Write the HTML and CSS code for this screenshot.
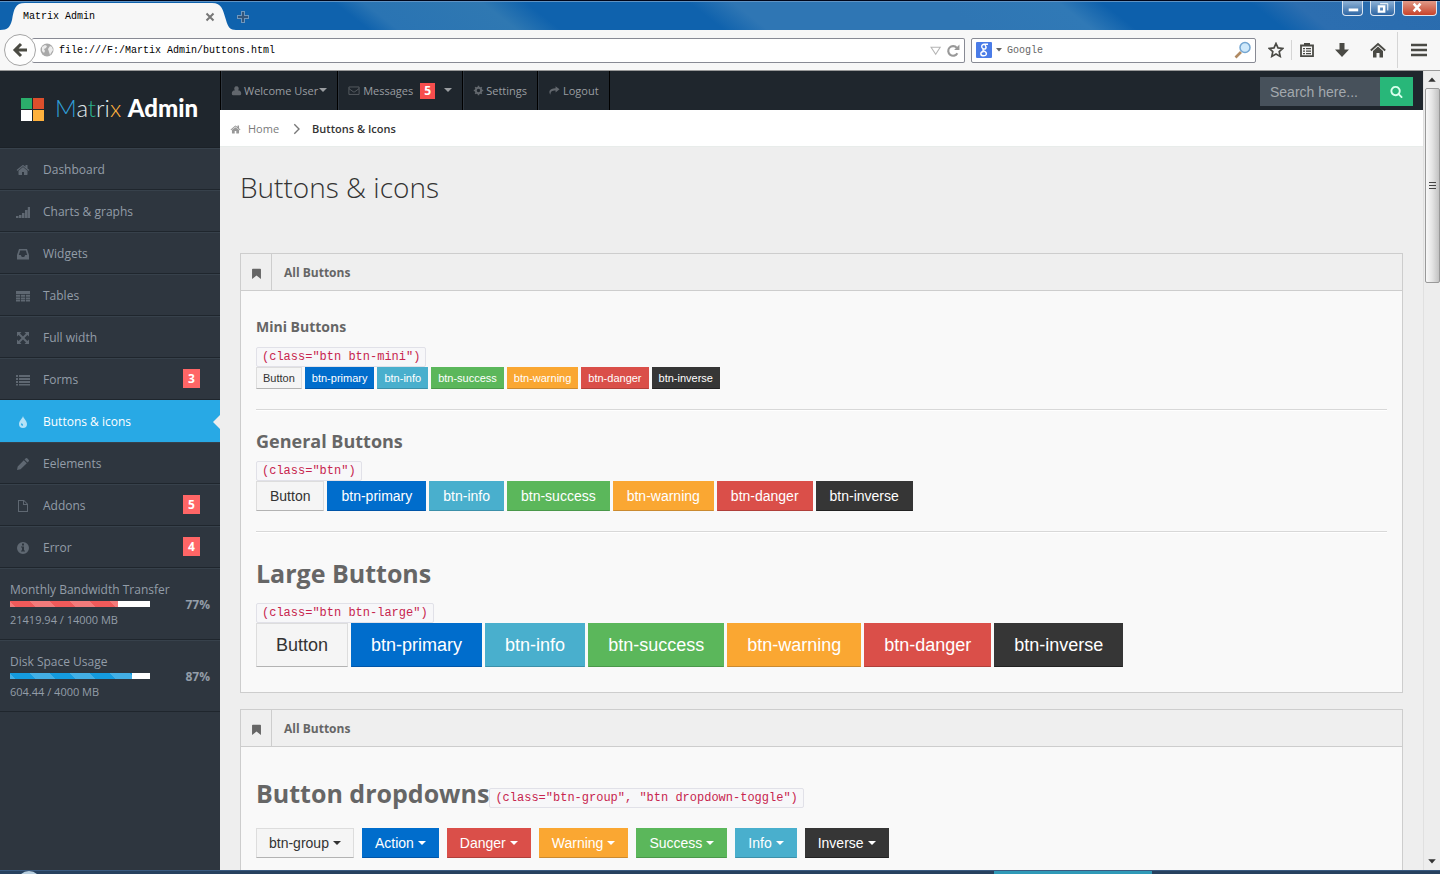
FILE: index.html
```html
<!DOCTYPE html>
<html lang="en">
<head>
<meta charset="utf-8">
<title>Matrix Admin</title>
<link rel="stylesheet" href="styles.css">
</head>
<body>
<svg class="sprite" aria-hidden="true">
  <symbol id="i-home" viewBox="0 0 1792 1792"><path d="M1472 992v480q0 26-19 45t-45 19h-384v-384h-256v384h-384q-26 0-45-19t-19-45v-480q0-1 .5-3t.5-3l575-474 575 474q1 2 1 6zm223-69l-62 74q-8 9-21 11h-3q-13 0-21-7l-692-577-692 577q-12 8-24 7-13-2-21-11l-62-74q-8-10-7-23.500t11-21.500l719-599q32-26 76-26t76 26l244 204v-195q0-14 9-23t23-9h192q14 0 23 9t9 23v408l219 182q10 8 11 21.500t-7 23.500z"/></symbol>
  <symbol id="i-search" viewBox="0 0 1792 1792"><path d="M1216 832q0-185-131.500-316.500t-316.500-131.500-316.500 131.500-131.500 316.500 131.500 316.500 316.500 131.500 316.500-131.500 131.500-316.500zm512 832q0 52-38 90t-90 38q-54 0-90-38l-343-342q-179 124-399 124-143 0-273.500-55.500t-225-150-150-225-55.500-273.500 55.500-273.500 150-225 225-150 273.500-55.500 273.500 55.500 225 150 150 225 55.500 273.500q0 220-124 399l343 343q37 37 37 90z"/></symbol>
  <symbol id="i-signal" viewBox="0 0 14 14"><path d="M0 11h2.500v2H0zM3 10h2.500v3H3zM6 8h2.500v5H6zM9 5h2.500v8H9zM11.800 2H14v11h-2.200z"/></symbol>
  <symbol id="i-inbox" viewBox="0 0 14 14"><path fill-rule="evenodd" d="M3 2h8l2 6v4.500H1V8zM4.200 3.500L2.800 8h2l1 2h2.400l1-2h2L9.800 3.500z"/></symbol>
  <symbol id="i-table" viewBox="0 0 14 14"><path fill-rule="evenodd" d="M0 2h14v3H0zM0 5.800h4.200v2H0zM5 5.800h4v2H5zM9.800 5.800H14v2H9.800zM0 8.400h4.200v1.800H0zM5 8.400h4v1.800H5zM9.800 8.400H14v1.800H9.800zM0 10.800h4.200v1.700H0zM5 10.800h4v1.700H5zM9.800 10.800H14v1.700H9.800z"/></symbol>
  <symbol id="i-full" viewBox="0 0 14 14"><path d="M1 1h4.500L4 2.600l3 3 3-3L8.500 1H13v4.500L11.400 4l-3 3 3 3L13 8.500V13H8.500l1.500-1.600-3-3-3 3L5.500 13H1V8.500L2.600 10l3-3-3-3L1 5.500z"/></symbol>
  <symbol id="i-list" viewBox="0 0 14 14"><path d="M0 2h2v2H0zM3 2h11v2H3zM0 5h2v2H0zM3 5h11v2H3zM0 8h2v2H0zM3 8h11v2H3zM0 11h2v1.600H0zM3 11h11v1.600H3z"/></symbol>
  <symbol id="i-tint" viewBox="0 0 14 14"><path fill-rule="evenodd" d="M7 1c.5 2.500 4 5 4 8a4 4 0 0 1-8 0c0-3 3.500-5.500 4-8zM5.800 8c-.8 1-1.200 2 .2 2.700.8.300 1.300-.6.900-1.200-.4-.5-.8-.8-1.100-1.500z"/></symbol>
  <symbol id="i-pencil" viewBox="0 0 14 14"><path d="M1 13l.7-3.600L7.800 3.300l3 3-6.200 6zM8.500 2.600l1.300-1.300q.7-.6 1.400 0l1.600 1.600q.6.700 0 1.400l-1.300 1.300z"/></symbol>
  <symbol id="i-file" viewBox="0 0 14 14"><path fill-rule="evenodd" d="M2 1h6l4 4v8H2zM3 2v10h8V6H7V2zM8 2.300V5h2.700z"/></symbol>
  <symbol id="i-info" viewBox="0 0 14 14"><path fill-rule="evenodd" d="M7 1a6 6 0 1 1 0 12A6 6 0 0 1 7 1zM6 2.500v2h2v-2zM5 5.500v1h1v3H5v1h4v-1H8v-4z"/></symbol>
  <symbol id="i-user" viewBox="0 0 14 14"><path d="M7 1.500a2.900 2.900 0 0 1 1.900 5.100Q13 7 13 11q0 2-2 2H3q-2 0-2-2 0-4 4.100-4.400A2.900 2.900 0 0 1 7 1.500z"/></symbol>
  <symbol id="i-mail" viewBox="0 0 14 14"><path fill="none" stroke="currentColor" d="M.5 2.500h13v9.500H.5zM.5 4.500L6 8.600q1 .7 2 0l5.500-4.100"/></symbol>
  <symbol id="i-cog" viewBox="0 0 14 14"><path fill="none" stroke="currentColor" stroke-width="2.600" d="M7 3.500a3.500 3.500 0 1 1 0 7 3.500 3.500 0 0 1 0-7z"/><path stroke="currentColor" stroke-width="2" d="M7 1v2M7 11v2M1 7h2M11 7h2M2.800 2.800l1.400 1.400M9.800 9.800l1.400 1.400M2.800 11.200l1.400-1.400M9.800 4.200l1.400-1.400"/></symbol>
  <symbol id="i-share" viewBox="0 0 14 14"><path d="M9 1.500l5 4-5 4V7C4.500 7 2.500 8 2.500 12.500 0 9 .5 4 9 4z"/></symbol>
  <symbol id="i-bookmark" viewBox="0 0 14 14"><path d="M3 2h8q.8 0 .8.800V13L7 9.200 2.200 13V2.800Q2.200 2 3 2z"/></symbol>
  <symbol id="i-chevron" viewBox="0 0 14 14"><path fill="none" stroke="currentColor" stroke-width="1.600" d="M5 1.500L10.500 7 5 12.500"/></symbol>
</svg>

<header class="titlebar">
  <div class="tab">
    <svg class="tab-shape" viewBox="0 0 236 27" preserveAspectRatio="none"><path d="M0 27C8 27 10 24 12 17C14 6 15 0 25 0H212C222 0 223 7 226 17C228 24 230 27 236 27Z"/></svg>
    <span class="tab-title">Matrix Admin</span>
    <button class="plain tab-close" aria-label="Close tab"><svg viewBox="0 0 10 10"><path d="M1.500 1.500l7 7M8.500 1.500l-7 7"/></svg></button>
  </div>
  <button class="plain tab-new" aria-label="New tab"><svg viewBox="0 0 12 12"><path class="edge" d="M6 0v12M0 6h12"/><path d="M6 1v10M1 6h10"/></svg></button>
  <div class="win">
    <button class="win-min" aria-label="Minimize"><svg viewBox="0 0 20 14"><path d="M6 7.500h10v3H6z"/></svg></button>
    <button class="win-max" aria-label="Restore"><svg viewBox="0 0 24 14"><path fill-rule="evenodd" d="M7 4h8v8H7zM9.500 6.500v3h3v-3z"/><path fill="none" stroke="#fff" d="M9.500 2.500h8v7"/></svg></button>
    <button class="win-close" aria-label="Close"><svg viewBox="0 0 34 14"><path fill="none" stroke="#fff" stroke-width="2.600" d="M11 2.500l7 8M18 2.500l-7 8"/></svg></button>
  </div>
</header>

<div class="toolbar">
  <button class="back" aria-label="Back"><svg viewBox="0 0 16 16"><path d="M9 2L3 8l6 6M3 8h12"/></svg></button>
  <div class="field url">
    <svg class="globe" viewBox="0 0 14 14"><circle cx="7" cy="7" r="6.500" fill="#a9a9a9"/><path fill="#ececec" d="M2 4l3-2 2 1-1 2-2 1 1 2-1 2-2-2zM8 6l2-3 2 1 1 3-2 3-1 2-1-3z"/></svg>
    <input type="text" aria-label="Address" value="file:///F:/Martix Admin/buttons.html">
    <svg class="urltools" viewBox="0 0 28 14"><path fill="none" stroke="#b5b5b5" d="M1 4h8.500L5.300 10.500z"/><path fill="none" stroke="#999" stroke-width="2" d="M25.500 9.500A4.500 4.500 0 1 1 25 4.500"/><path fill="#999" d="M27.500 1.500v5h-5z"/></svg>
  </div>
  <div class="field google">
    <svg class="g" viewBox="0 0 16 16"><rect width="16" height="16" rx="1" fill="#4a7ce8"/><path fill="none" stroke="#fff" stroke-width="1.400" d="M12 2.200H8.500a2.600 2.400 0 1 0 1.200 4.400q.9-2-.8-4M7.200 7.300q-.9 1.100 1 1.900c3.200 1.300 2.800 4.600-.6 4.600s-4-3.800 0-4.300"/></svg>
    <svg class="tiny" viewBox="0 0 6 4"><path fill="#666" d="M0 0h6L3 3.500z"/></svg>
    <input type="text" aria-label="Web search" placeholder="Google">
    <svg class="lens" viewBox="0 0 18 18"><path stroke="#b08a62" stroke-width="2.600" d="M1.500 16.500L7 11"/><circle cx="11" cy="6.500" r="5" fill="#cfe9fb" stroke="#74a6d2" stroke-width="1.500"/></svg>
  </div>
  <nav class="tools" aria-label="Browser tools">
    <button class="plain" aria-label="Bookmark"><svg viewBox="0 0 16 16"><path fill="none" stroke="#4a4a45" stroke-width="1.700" d="M8 1.500l2 4.400 4.800.5-3.600 3.200 1 4.800L8 12l-4.200 2.400 1-4.800L1.200 6.400 6 5.900z"/></svg></button>
    <i class="sep short"></i>
    <button class="plain" aria-label="Bookmark list"><svg viewBox="0 0 16 16"><path fill="none" stroke="#4a4a45" stroke-width="1.800" d="M2 3.500h12v10.700H2z"/><path fill="#4a4a45" d="M5 1h6v3H5zM4 6h2v1.300H4zM7 6h5v1.300H7zM4 8.500h2v1.300H4zM7 8.500h5v1.300H7zM4 11h2v1.300H4zM7 11h5v1.300H7z"/></svg></button>
    <button class="plain down" aria-label="Downloads"><svg viewBox="0 0 16 16"><path fill="#4a4a45" d="M5.500 1h5v6.500H15L8 15 1 7.500h4.500z"/></svg></button>
    <button class="plain home" aria-label="Home"><svg viewBox="0 0 16 16"><path fill="none" stroke="#4a4a45" stroke-width="1.800" d="M.8 8.500L8 2l7.200 6.500"/><path fill="#4a4a45" d="M3 9l5-4.500L13 9v6.500H9.500V11h-3v4.500H3z"/></svg></button>
    <i class="sep"></i>
    <button class="plain menu" aria-label="Menu"><svg viewBox="0 0 16 16"><path stroke="#4a4a45" stroke-width="2.600" d="M0 3h16M0 8h16M0 13h16"/></svg></button>
  </nav>
</div>

<div class="viewport">
  <aside class="sidebar">
    <div class="logo">
      <svg viewBox="0 0 23 23"><path fill="#2bae6b" d="M0 0h11v11H0z"/><path fill="#dc4f2c" d="M12 0h11v11H12z"/><path fill="#fff" d="M0 12h11v11H0z"/><path fill="#ffb13d" d="M12 12h11v11H12z"/></svg>
      <span class="word"><span class="c1">M</span><span class="c2">a</span><span class="c3">t</span><span class="c2">ri</span><span class="c4">x</span> <b>Admin</b></span>
    </div>
    <nav class="nav">
      <a href="#"><svg><use href="#i-home"/></svg><span>Dashboard</span></a>
      <a href="#"><svg><use href="#i-signal"/></svg><span>Charts &amp; graphs</span></a>
      <a href="#"><svg><use href="#i-inbox"/></svg><span>Widgets</span></a>
      <a href="#"><svg><use href="#i-table"/></svg><span>Tables</span></a>
      <a href="#"><svg><use href="#i-full"/></svg><span>Full width</span></a>
      <a href="#"><svg><use href="#i-list"/></svg><span>Forms</span><b class="badge">3</b></a>
      <a href="#" class="active"><svg><use href="#i-tint"/></svg><span>Buttons &amp; icons</span></a>
      <a href="#"><svg><use href="#i-pencil"/></svg><span>Eelements</span></a>
      <a href="#"><svg><use href="#i-file"/></svg><span>Addons</span><b class="badge">5</b></a>
      <a href="#"><svg><use href="#i-info"/></svg><span>Error</span><b class="badge">4</b></a>
    </nav>
    <section class="stat">
      <div class="stat-main"><span class="stat-name">Monthly Bandwidth Transfer</span>
        <div class="bar"><div class="fill red" style="width:77%"></div></div>
        <span class="stat-val">21419.94 / 14000 MB</span></div>
      <b>77%</b>
    </section>
    <section class="stat">
      <div class="stat-main"><span class="stat-name">Disk Space Usage</span>
        <div class="bar"><div class="fill blue" style="width:87%"></div></div>
        <span class="stat-val">604.44 / 4000 MB</span></div>
      <b>87%</b>
    </section>
  </aside>

  <main class="content">
    <div class="topbar">
      <nav class="usernav">
        <a href="#"><svg><use href="#i-user"/></svg>Welcome User<i class="caret"></i></a>
        <a href="#"><svg class="wide"><use href="#i-mail"/></svg>Messages<b class="count">5</b><i class="caret far"></i></a>
        <a href="#"><svg><use href="#i-cog"/></svg>Settings</a>
        <a href="#"><svg class="wide"><use href="#i-share"/></svg>Logout</a>
      </nav>
      <form class="search">
        <input type="text" aria-label="Search" placeholder="Search here...">
        <button type="button" aria-label="Search"><svg><use href="#i-search"/></svg></button>
      </form>
    </div>
    <nav class="crumbs" aria-label="Breadcrumb">
      <a href="#"><svg class="house"><use href="#i-home"/></svg>Home</a>
      <svg class="chev"><use href="#i-chevron"/></svg>
      <a href="#" class="current">Buttons &amp; Icons</a>
    </nav>
    <h1>Buttons &amp; icons</h1>

    <section class="widget">
      <header><span class="mark"><svg><use href="#i-bookmark"/></svg></span><h2>All Buttons</h2></header>
      <div class="body">
        <h5>Mini Buttons</h5>
        <code>(class="btn btn-mini")</code>
        <div class="row mini">
          <button class="btn">Button</button><button class="btn primary">btn-primary</button><button class="btn info">btn-info</button><button class="btn success">btn-success</button><button class="btn warning">btn-warning</button><button class="btn danger">btn-danger</button><button class="btn inverse">btn-inverse</button>
        </div>
        <hr>
        <h4>General Buttons</h4>
        <code>(class="btn")</code>
        <div class="row general">
          <button class="btn">Button</button><button class="btn primary">btn-primary</button><button class="btn info">btn-info</button><button class="btn success">btn-success</button><button class="btn warning">btn-warning</button><button class="btn danger">btn-danger</button><button class="btn inverse">btn-inverse</button>
        </div>
        <hr>
        <h3>Large Buttons</h3>
        <code>(class="btn btn-large")</code>
        <div class="row large">
          <button class="btn">Button</button><button class="btn primary">btn-primary</button><button class="btn info">btn-info</button><button class="btn success">btn-success</button><button class="btn warning">btn-warning</button><button class="btn danger">btn-danger</button><button class="btn inverse">btn-inverse</button>
        </div>
      </div>
    </section>

    <section class="widget">
      <header><span class="mark"><svg><use href="#i-bookmark"/></svg></span><h2>All Buttons</h2></header>
      <div class="body">
        <div class="headline"><h3>Button dropdowns</h3><code>(class="btn-group", "btn dropdown-toggle")</code></div>
        <div class="row groups">
          <button class="btn">btn-group<i class="caret"></i></button><button class="btn primary">Action<i class="caret"></i></button><button class="btn danger">Danger<i class="caret"></i></button><button class="btn warning">Warning<i class="caret"></i></button><button class="btn success">Success<i class="caret"></i></button><button class="btn info">Info<i class="caret"></i></button><button class="btn inverse">Inverse<i class="caret"></i></button>
        </div>
      </div>
    </section>
  </main>

  <div class="scroll" aria-hidden="true">
    <svg class="arrow" viewBox="0 0 17 17"><path d="M4.500 11L8.500 6.500l4 4.500z"/></svg>
    <div class="thumb"><i></i><i></i><i></i></div>
    <svg class="arrow end" viewBox="0 0 17 17"><path d="M4.500 6l4 4.500L12.500 6z"/></svg>
  </div>
</div>
<footer class="taskbar"><i class="orb"></i><i class="task"></i></footer>
</body>
</html>
```
FILE: styles.css
```css
* { box-sizing: border-box; }
body {
  margin: 0;
  height: 100vh;
  display: flex;
  flex-direction: column;
  overflow: hidden;
  font: 12px/20px "Open Sans", sans-serif;
  color: #666;
}
a { color: inherit; text-decoration: none; }
button, input { font: inherit; margin: 0; padding: 0; border: 0; border-radius: 0; }
svg { fill: currentColor; flex: none; display: block; }
i { font-style: normal; }
.sprite { position: absolute; width: 0; height: 0; }
.plain { background: none; display: flex; align-items: center; justify-content: center; }

/* window title bar */
.titlebar {
  flex: none;
  height: 30px;
  display: flex;
  align-items: stretch;
  border-top: 1px solid #00061a;
  box-shadow: inset 0 1px 0 #5f93c4;
  background: linear-gradient(38deg, #0f62ad 0%, #0f62ad 25%, #2a74b3 27%, #2f78b2 35%, #0f62ad 38%, #0f62ad 49%, #2f76b4 52%, #2f76b4 66%, #3079b6 74%, #0d60ac 77%, #0d60ac 87%, #2c6eb0 90%, #2a6cae 100%);
}
.tab {
  position: relative;
  width: 236px;
  display: flex;
  align-items: center;
  padding: 3px 21px 0 23px;
}
.tab-shape { position: absolute; left: 0; bottom: 0; width: 100%; height: 27px; fill: #f7f7f7; }
.tab-title, .tab-close { position: relative; }
.tab-title { flex: 1; color: #000; font: 10px/20px "Liberation Mono", monospace; }
.tab-close svg { width: 10px; height: 10px; stroke: #777; stroke-width: 2; }
.tab-new { padding-top: 2px; margin-left: 1px; }
.tab-new svg { width: 12px; height: 12px; stroke: #33557a; stroke-width: 2; }
.tab-new .edge { stroke: #6f97bd; stroke-width: 4; }
.win { margin-left: auto; padding-right: 3px; display: flex; gap: 7px; align-items: flex-start; }
.win button {
  height: 15px;
  border: 1px solid #dbe6f2;
  border-top: 0;
  border-radius: 0 0 4px 4px;
  background: linear-gradient(#8eb2d6, #2e66a4);
  color: #fff;
}
.win-min { width: 21px; }
.win-max { width: 25px; }
.win .win-close { width: 35px; background: linear-gradient(#e09a88, #c8432a); }
.win svg { width: 100%; height: 14px; }

/* browser toolbar */
.toolbar {
  flex: none;
  height: 41px;
  display: flex;
  align-items: center;
  padding: 0 13px 0 4px;
  background: #f7f7f7;
  border-bottom: 1px solid #999;
}
.back {
  position: relative;
  width: 32px;
  height: 32px;
  border: 1px solid #a5a5a5;
  border-radius: 50%;
  background: #fdfdfd;
  display: flex;
  align-items: center;
  justify-content: center;
}
.back svg { width: 16px; height: 16px; fill: none; stroke: #4a4a42; stroke-width: 3; }
.field {
  height: 25px;
  display: flex;
  align-items: center;
  border: 1px solid #888a94;
  border-radius: 2px;
  background: #fff;
  font: 10px/20px "Liberation Mono", monospace;
}
.field input { flex: 1; min-width: 0; height: 23px; padding-top: 1px; background: none; color: #000; outline: 0; }
.url { flex: 1; margin-left: -4px; padding: 0 4px 0 8px; border-left: 0; }
.globe { width: 14px; height: 14px; margin-right: 5px; }
.urltools { width: 30px; height: 15px; }
.google { width: 285px; margin-left: 6px; padding: 0 3px 0 4px; }
.g { width: 16px; height: 16px; }
.tiny { width: 6px; height: 4px; margin: 0 5px 0 4px; }
.google input::placeholder { color: #666; opacity: 1; }
.lens { width: 18px; height: 18px; }
.tools { display: flex; align-items: center; margin-left: 12px; }
.tools svg { width: 16px; height: 16px; }
.sep { width: 1px; height: 36px; background: #d5d5d5; margin: 0 11px; }
.sep.short { height: 20px; margin: 0 7px; }
.down { margin-left: 19px; }
.home { margin-left: 20px; }
.menu { padding-left: 2px; }

/* page */
.viewport {
  flex: 1;
  min-height: 0;
  display: grid;
  grid-template-columns: 220px 1fr 17px;
  background: #eee;
}
.sidebar { background: #2e363f; color: #939da8; overflow: hidden; }
.logo {
  height: 77px;
  padding-left: 21px;
  display: flex;
  align-items: center;
  gap: 11px;
  background: #1f262d;
  border-bottom: 1px solid #1b2127;
}
.logo svg { width: 23px; height: 23px; }
.word { padding-bottom: 3px; font: 300 24px/30px Lato, sans-serif; color: #fff; white-space: nowrap; }
.word b { font-weight: 900; }
.c1 { color: #2f9fd8; }
.c2 { color: #dfe6ea; }
.c3 { color: #2bae8b; }
.c4 { color: #ffb13d; }
.nav a {
  height: 42px;
  padding: 2px 20px 0 16px;
  display: flex;
  align-items: center;
  border-top: 1px solid #37414b;
  border-bottom: 1px solid #1f262d;
}
.nav svg { width: 14px; height: 14px; margin-right: 13px; color: #5f6872; }
.nav span { flex: 1; }
.nav .active {
  position: relative;
  background: #28a9e5;
  border-color: #28a9e5;
  color: #fff;
}
.nav .active svg { color: #b6e2f7; }
.nav .active::after {
  content: "";
  position: absolute;
  right: 0;
  border: 7px solid transparent;
  border-left: 0;
  border-right-color: #eee;
}
.badge {
  width: 17px;
  height: 19px;
  margin-bottom: 4px;
  text-align: center;
  line-height: 20px;
  font-size: 12px;
  color: #fff;
  background: #f66;
}
.stat {
  height: 72px;
  padding: 11px 10px 0;
  display: flex;
  justify-content: space-between;
  border-top: 1px solid #37414b;
  border-bottom: 1px solid #1f262d;
  white-space: nowrap;
}
.stat-main { width: 140px; }
.stat-name, .stat-val { display: block; }
.stat-val { font-size: 11px; line-height: 26px; }
.stat > b { padding-top: 15px; }
.bar { height: 6px; margin-top: 1px; background: #fff; }
.fill { height: 6px; background-image: linear-gradient(45deg, transparent 25%, #ffffff33 25% 50%, transparent 50% 75%, #ffffff33 75%); background-size: 40px 40px; }
.red { background-color: #f05a5a; }
.blue { background-color: #149bdf; }

.content { min-width: 0; overflow: hidden; }
.topbar {
  height: 39px;
  display: flex;
  justify-content: space-between;
  align-items: center;
  background: #1f262d;
}
.usernav { display: flex; height: 39px; border-left: 1px solid #000; }
.usernav a {
  display: flex;
  align-items: center;
  padding: 0 10px;
  font-size: 11px;
  color: #9a9da1;
  border-right: 1px solid #000;
  box-shadow: inset 1px 0 #2e363f;
}
.usernav svg { width: 11px; height: 11px; margin-right: 2px; color: #62676d; }
.usernav .wide { width: 12px; margin-right: 3px; }
.caret {
  display: inline-block;
  border: 4px solid transparent;
  border-top-color: currentColor;
  border-bottom: 0;
}
.usernav .caret { margin-bottom: 2px; margin-left: 1px; }
.usernav .far { margin-left: 9px; }
.count { width: 15px; margin-left: 7px; text-align: center; line-height: 16px; font-size: 12px; color: #fff; background: #f74d4d; }
.search { display: flex; margin-right: 10px; height: 29px; margin-top: 2px; }
.search input {
  width: 120px;
  padding: 0 10px;
  background: #47515b;
  color: #ccc;
  font: 14px/20px "Liberation Sans", Arial, sans-serif;
}
.search input::placeholder { color: #a3a9ae; opacity: 1; }
.search button { width: 33px; background: #28b779; color: #d8ffec; display: flex; align-items: center; justify-content: center; }
.search button svg { width: 13px; height: 13px; }
.crumbs {
  height: 37px;
  display: flex;
  align-items: center;
  padding: 2px 0 0 10px;
  background: #fff;
  border-bottom: 1px solid #e8ecea;
  font-size: 11px;
}
.crumbs a { display: flex; align-items: center; color: #7a7a7a; }
.house { width: 11px; height: 11px; margin-right: 7px; color: #999; }
.chev { width: 12px; height: 12px; margin: 0 10px 0 11px; color: #777; }
.crumbs .current { font-weight: 600; color: #333; }
h1 { margin: 20px 20px 46px; font-size: 28px; line-height: 40px; font-weight: 300; color: #333; }

.widget { margin: 0 20px 16px; border: 1px solid #cdcdcd; background: #f9f9f9; }
.widget > header { height: 37px; display: flex; align-items: center; background: #efefef; border-bottom: 1px solid #cdcdcd; }
.mark { width: 31px; height: 36px; padding-top: 3px; display: flex; align-items: center; justify-content: center; border-right: 1px solid #cdcdcd; }
.mark svg { width: 13px; height: 13px; }
h2 { margin: 1px 0 0 12px; font-size: 12px; line-height: 20px; font-weight: 700; }
.body { padding: 26px 15px 25px; }
h3, h4, h5 { margin: 0 0 10px; line-height: 20px; font-weight: 700; color: #666; }
h5 { font-size: 14px; }
h4 { font-size: 18px; }
h3 { font-size: 25px; line-height: 40px; }
code {
  display: block;
  width: max-content;
  padding: 1px 5px 0;
  border: 1px solid #e1e1e8;
  background: #f7f7f9;
  border-radius: 2px;
  font: 12px/17px "Liberation Mono", monospace;
  color: #c7254e;
}
hr { margin: 20px 0; border: 0; border-top: 1px solid #d8d8d8; border-bottom: 1px solid #fff; }
.row { display: flex; gap: 3px; }
.btn {
  height: 30px;
  padding: 0 12px;
  border: 1px solid #ddd;
  border-bottom-color: #b3b3b3;
  background: #f5f5f5;
  color: #333;
  font: 14px/20px "Liberation Sans", Arial, sans-serif;
  white-space: nowrap;
}
.mini .btn { height: 22px; padding: 0 6px; font-size: 11px; }
.general .btn { padding: 0 13px; }
.large .btn { height: 44px; padding: 0 19px; font-size: 18px; }
.row .primary, .row .info, .row .success, .row .warning, .row .danger, .row .inverse { color: #fff; }
.primary { background: #006dcc; border-color: #006dcc #006dcc #0055a8; }
.info { background: #49afcd; border-color: #49afcd #49afcd #3c90a9; }
.success { background: #5bb75b; border-color: #5bb75b #5bb75b #4a984a; }
.warning { background: #faa732; border-color: #faa732 #faa732 #ca8a30; }
.danger { background: #da4f49; border-color: #da4f49 #da4f49 #b03f3a; }
.inverse { background: #363636; border-color: #363636 #363636 #222; }
.headline { display: flex; align-items: flex-start; height: 55px; }
.headline code { margin-top: 15px; }
.groups { gap: 8px; }
.groups .btn { display: flex; align-items: center; }
.groups .caret { margin-left: 4px; }

/* scroll bar */
.scroll { display: flex; flex-direction: column; align-items: center; background: #ededed; border-left: 1px solid #e0e0e0; color: #333; }
.arrow { width: 16px; height: 17px; }
.end { margin-top: auto; }
.thumb {
  width: 15px;
  height: 195px;
  border: 1px solid #999;
  border-radius: 2px;
  background: linear-gradient(90deg, #f8f8f8, #e6e6e6 45%, #c2c2c2);
  display: flex;
  flex-direction: column;
  align-items: center;
  justify-content: center;
  gap: 2px;
}
.thumb i { width: 7px; height: 1px; background: #444; }

.taskbar { flex: none; height: 4px; display: flex; background: #27415f; overflow: hidden; border-top: 1px solid #3a5a80; }
.orb { width: 24px; height: 24px; margin-left: 17px; border-radius: 50%; background: #b8cfe0; }
.task { width: 158px; height: 3px; margin-left: auto; margin-right: 20%; background: #2f9ab8; }
```
